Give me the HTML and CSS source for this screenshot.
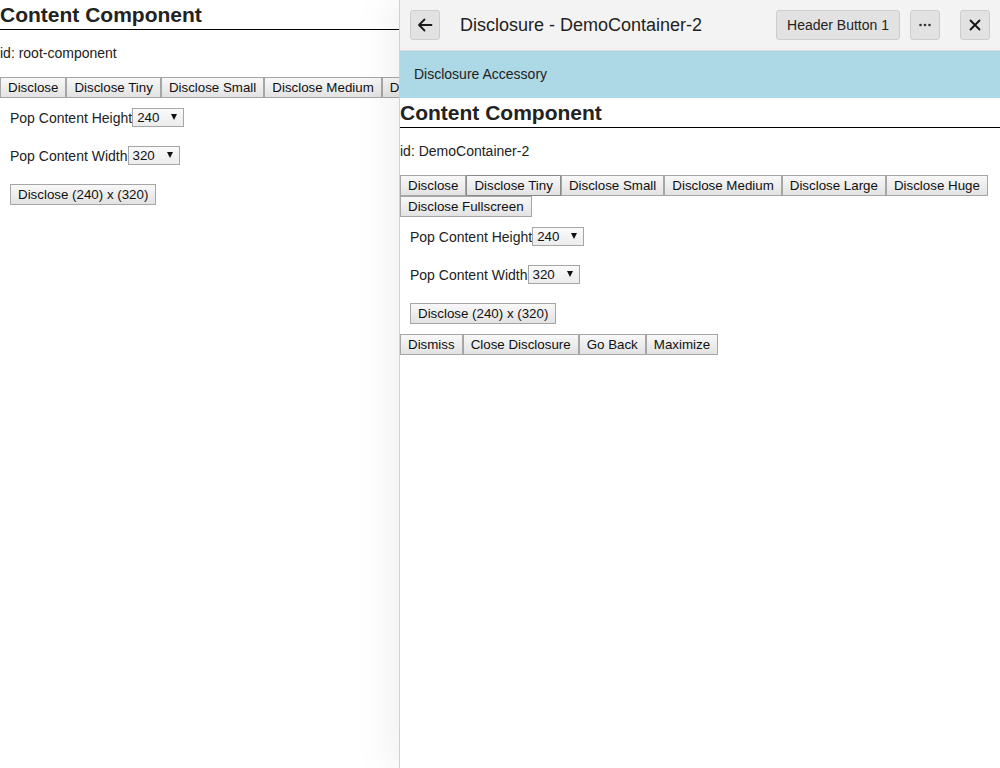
FILE: index.html
```html
<!DOCTYPE html>
<html>
<head>
<meta charset="utf-8">
<link rel="stylesheet" href="styles.css">
</head>
<body>
<div class="page">
  <section class="content">
    <h2 class="title">Content Component</h2>
    <p class="cid">id: root-component</p>
    <div class="btnrow">
      <button class="btn">Disclose</button><button class="btn">Disclose Tiny</button><button class="btn">Disclose Small</button><button class="btn">Disclose Medium</button><button class="btn">Disclose Large</button>
    </div>
    <div class="controls">
      <div class="ctl"><span class="lbl">Pop Content Height</span><span class="sel">240<span class="arr"></span></span></div>
      <div class="ctl"><span class="lbl">Pop Content Width</span><span class="sel">320<span class="arr"></span></span></div>
      <div class="ctl"><button class="btn">Disclose (240) x (320)</button></div>
    </div>
  </section>
</div>

<aside class="panel">
  <header class="phead">
    <button class="hbtn icon" aria-label="Back">
      <svg width="16" height="16" viewBox="0 0 16 16"><path d="M14.5 8H2M7.5 2.5L2 8L7.5 13.5" fill="none" stroke="#1a1a1a" stroke-width="1.8" stroke-linecap="round" stroke-linejoin="round"/></svg>
    </button>
    <div class="ptitle">Disclosure - DemoContainer-2</div>
    <button class="hbtn text">Header Button 1</button>
    <button class="hbtn icon more" aria-label="More">
      <svg width="16" height="16" viewBox="0 0 16 16"><circle cx="3.5" cy="8" r="1.3" fill="#333"/><circle cx="8" cy="8" r="1.3" fill="#333"/><circle cx="12.5" cy="8" r="1.3" fill="#333"/></svg>
    </button>
    <button class="hbtn icon close" aria-label="Close">
      <svg width="16" height="16" viewBox="0 0 16 16"><path d="M3.5 3.5L12.5 12.5M12.5 3.5L3.5 12.5" fill="none" stroke="#111" stroke-width="1.8" stroke-linecap="round"/></svg>
    </button>
  </header>
  <div class="accessory">Disclosure Accessory</div>
  <section class="content">
    <h2 class="title">Content Component</h2>
    <p class="cid">id: DemoContainer-2</p>
    <div class="btnrow">
      <button class="btn">Disclose</button><button class="btn hover">Disclose Tiny</button><button class="btn">Disclose Small</button><button class="btn">Disclose Medium</button><button class="btn">Disclose Large</button><button class="btn">Disclose Huge</button><button class="btn">Disclose Fullscreen</button>
    </div>
    <div class="controls">
      <div class="ctl"><span class="lbl">Pop Content Height</span><span class="sel">240<span class="arr"></span></span></div>
      <div class="ctl"><span class="lbl">Pop Content Width</span><span class="sel">320<span class="arr"></span></span></div>
      <div class="ctl"><button class="btn">Disclose (240) x (320)</button></div>
    </div>
    <div class="btnrow">
      <button class="btn">Dismiss</button><button class="btn">Close Disclosure</button><button class="btn">Go Back</button><button class="btn">Maximize</button>
    </div>
  </section>
</aside>
</body>
</html>
```

FILE: styles.css
```css
html, body {
  margin: 0;
  padding: 0;
  background: #fff;
}
body {
  font-family: "Liberation Sans", Arial, sans-serif;
  font-size: 14px;
  color: #222;
  width: 1000px;
  height: 768px;
  overflow: hidden;
  position: relative;
}
.page {
  width: 400px;
  overflow: hidden;
}
.title {
  margin: 0;
  font-size: 21px;
  font-weight: bold;
  line-height: 29px;
  border-bottom: 1px solid #000;
  color: #222;
  white-space: nowrap;
}
.cid {
  margin: 15px 0 16px;
  line-height: 16px;
}
.btnrow {
  display: flex;
  flex-wrap: wrap;
}
.page .btnrow {
  flex-wrap: nowrap;
}
.btn {
  font-family: "Liberation Sans", Arial, sans-serif;
  font-size: 13.333px;
  line-height: 15px;
  color: #111;
  height: 21px;
  padding: 2px 7px;
  margin: 0;
  border: 1px solid #a6a6a6;
  border-radius: 0;
  background: linear-gradient(#f8f8f8, #e2e2e2);
  white-space: nowrap;
  flex: none;
}
.btn.hover {
  border-color: #8a8a8a;
}
.controls {
  padding: 10px;
  display: flex;
  flex-direction: column;
  align-items: flex-start;
  gap: 19px;
}
.ctl {
  display: flex;
  align-items: center;
  height: 19px;
}
.ctl:last-child {
  height: 21px;
}
.lbl {
  line-height: 16px;
}
.sel {
  position: relative;
  display: inline-block;
  box-sizing: border-box;
  width: 52px;
  height: 19px;
  border: 1px solid #a6a6a6;
  background: linear-gradient(#fafafa, #ececec);
  font-size: 13.333px;
  line-height: 17px;
  padding-left: 4px;
  color: #111;
}
.sel .arr {
  position: absolute;
  right: 6px;
  top: 5px;
  width: 0;
  height: 0;
  border-left: 3.5px solid transparent;
  border-right: 3.5px solid transparent;
  border-top: 6px solid #111;
}
.panel {
  position: absolute;
  top: 0;
  right: 0;
  width: 601px;
  height: 768px;
  box-sizing: border-box;
  background: #fff;
  border-left: 1px solid #d0d0d0;
  box-shadow: -6px 0 40px rgba(0, 0, 0, 0.07);
}
.phead {
  display: flex;
  align-items: center;
  box-sizing: border-box;
  padding: 0 10px;
  background: #f3f3f3;
  border-bottom: 1px solid #dcdcdc;
  height: 51px;
}
.hbtn {
  height: 30px;
  box-sizing: border-box;
  border: 1px solid #cdcdcd;
  border-radius: 3px;
  background: #e2e2e2;
  font-family: "Liberation Sans", Arial, sans-serif;
  font-size: 14px;
  color: #222;
  margin: 0;
  padding: 0;
  display: flex;
  align-items: center;
  justify-content: center;
  flex: none;
}
.hbtn.icon {
  width: 30px;
}
.hbtn.text {
  width: 124px;
  padding: 0 10px;
}
.hbtn.more {
  margin-left: 10px;
}
.hbtn.close {
  margin-left: 20px;
}
.ptitle {
  flex: 1;
  padding-left: 20px;
  font-size: 18px;
  color: #222;
  line-height: 22px;
}
.accessory {
  background: #add8e6;
  height: 47px;
  box-sizing: border-box;
  padding: 15px 0 0 14px;
  line-height: 16px;
  font-size: 14px;
  color: #222;
}
```
